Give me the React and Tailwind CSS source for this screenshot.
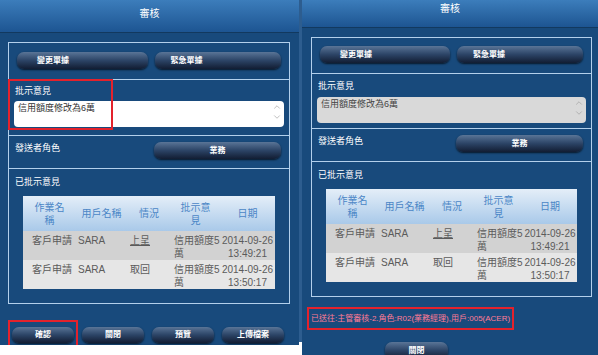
import { ChevronUp, ChevronDown } from "lucide-react";

const rows = [
  { task: "客戶申請", user: "SARA", state: "上呈", note: "信用額度5萬", date: "2014-09-26 13:49:21", bg: "bg-[#d2d2d2]" },
  { task: "客戶申請", user: "SARA", state: "取回", note: "信用額度5萬", date: "2014-09-26 13:50:17", bg: "bg-[#e6e6e6]" },
];

function Btn({ children, className = "" }) {
  return (
    <div
      className={`shrink-0 rounded-[7px] bg-gradient-to-b from-[#5a7597] via-[#2c4466] to-[#121d33] shadow-[0_1px_2px_rgba(0,0,0,0.7)] text-white text-[8px] font-bold flex items-center ${className}`}
    >
      {children}
    </div>
  );
}

function HistoryTable() {
  return (
    <table className="w-full table-fixed border-collapse text-[10px] leading-[13px]">
      <colgroup>
        <col className="w-[53px]" />
        <col className="w-[51px]" />
        <col className="w-[44px]" />
        <col className="w-[49px]" />
        <col />
      </colgroup>
      <thead>
        <tr className="bg-gradient-to-b from-[#e4eef8] to-[#a9c9e9] text-[#4b86c6] h-[35px]">
          <th className="font-normal px-[8px]">作業名稱</th>
          <th className="font-normal">用戶名稱</th>
          <th className="font-normal">情況</th>
          <th className="font-normal px-[7px]">批示意見</th>
          <th className="font-normal">日期</th>
        </tr>
      </thead>
      <tbody className="text-[#5b5b5b]">
        {rows.map((r, i) => (
          <tr key={i} className={`${r.bg} h-[29px] align-top`}>
            <td className="pl-[9px] pt-[3px]">{r.task}</td>
            <td className="pl-[2px] pt-[3px]">{r.user}</td>
            <td className="pl-[3px] pt-[3px]">
              <span className={i === 0 ? "underline" : ""}>{r.state}</span>
            </td>
            <td className="pl-[3px] pt-[3px] break-all">{r.note}</td>
            <td className="pt-[3px] text-center">{r.date}</td>
          </tr>
        ))}
      </tbody>
    </table>
  );
}

function Panel({ variant }) {
  const left = variant === "left";
  return (
    <div
      className={`relative shrink-0 flex flex-col bg-[#184a7c] overflow-hidden ${
        left ? "w-[299px] h-[345px]" : "w-[296px] h-[355px]"
      }`}
    >
      {/* HEADER */}
      <div
        className={`shrink-0 flex justify-center bg-gradient-to-b from-[#3c7dbb] to-[#1d5592] border-b border-[#12395f] text-white text-[10px] ${
          left ? "h-[33px] pt-[6px]" : "h-[28px] pt-[1px]"
        }`}
      >
        審核
      </div>

      {/* BOX */}
      <div
        className={`shrink-0 border-[1.5px] border-[#b3d0ec] ${
          left ? "mt-[9px] ml-[8px] mr-[9px]" : "mt-[9px] ml-[9px] mr-[6px]"
        }`}
      >
        <div className={`flex gap-[7px] px-[8px] ${left ? "h-[36px] pt-[9px]" : "h-[35px] pt-[8px]"}`}>
          <Btn className="h-[17px] flex-1 pl-[20px]">變更單據</Btn>
          <Btn className="h-[17px] flex-1 pl-[16px]">緊急單據</Btn>
        </div>

        <div className={`relative border-t-[1.5px] border-[#b3d0ec] px-[5px] ${left ? "h-[56px] pt-[5px]" : "h-[55px] pt-[6px]"}`}>
          <div className="text-white text-[9px] leading-[12px] pl-[1px]">批示意見</div>
          <div
            className={`h-[26px] rounded-[4px] flex justify-between pl-[4px] pr-[2px] pt-[2px] text-[9px] leading-[11px] ${
              left ? "mt-[4px] bg-white text-[#333]" : "mt-[5px] bg-[#d9d9d9] text-[#444]"
            }`}
          >
            <span>信用額度修改為6萬</span>
            <div className="flex flex-col text-[#9a9a9a] -mt-[1px]">
              <ChevronUp size={10} strokeWidth={1.5} />
              <ChevronDown size={10} strokeWidth={1.5} />
            </div>
          </div>
          {left && (
            <div className="absolute -left-[1.5px] top-[-1.5px] w-[105px] h-[51px] border-[2px] border-[#e3222c]" />
          )}
        </div>

        <div className="flex border-t-[1.5px] border-[#b3d0ec] h-[33px] pl-[6px] pr-[8px] pt-[6px]">
          <div className="flex-1 text-white text-[9px] leading-[12px]">發送者角色</div>
          <Btn className="h-[17px] w-[127px] justify-center">業務</Btn>
        </div>

        <div className="border-t-[1.5px] border-[#b3d0ec] px-[14px] pt-[7px] pb-[14px]">
          <div className="text-white text-[9px] leading-[12px] -ml-[8px] mb-[8px]">已批示意見</div>
          <HistoryTable />
        </div>
      </div>

      {left ? (
        <div className="shrink-0 flex items-start mt-[16px] pl-[8px]">
          <div className="border-[2px] border-[#e3222c] px-[2px] pt-[5px] pb-[3px]">
            <Btn className="h-[16px] w-[62px] justify-center">確認</Btn>
          </div>
          <Btn className="h-[16px] w-[62px] justify-center mt-[7px] ml-[4px]">關閉</Btn>
          <Btn className="h-[16px] w-[62px] justify-center mt-[7px] ml-[8px]">預覽</Btn>
          <Btn className="h-[16px] w-[62px] justify-center mt-[7px] ml-[8px]">上傳檔案</Btn>
        </div>
      ) : (
        <div className="shrink-0 flex flex-col">
          <div className="mt-[10px] ml-[5px] self-start border-[2px] border-[#e3222c] px-[2px] h-[23px] flex items-center text-[#ff7c96] text-[8px] whitespace-nowrap">
            已送往:主管審核-2.角色:R02(業務經理),用戶:005(ACER)
          </div>
          <Btn className="h-[17px] w-[63px] justify-center ml-[83px] mt-[12px]">關閉</Btn>
        </div>
      )}
    </div>
  );
}

export default function App() {
  return (
    <div className="w-[598px] h-[355px] flex bg-white overflow-hidden font-['Liberation_Sans','Noto_Sans_CJK_TC',sans-serif]">
      <Panel variant="left" />
      <div className="w-[3px] h-[342px] bg-[#2d5d8f]" />
      <Panel variant="right" />
    </div>
  );
}
